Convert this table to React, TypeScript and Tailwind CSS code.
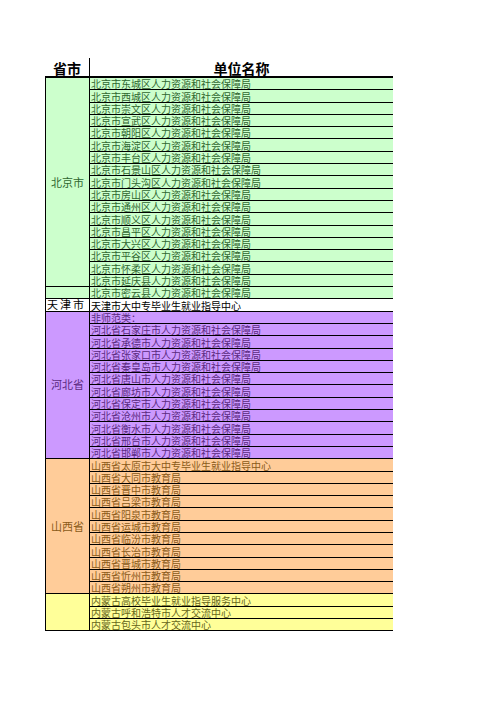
const font = { fontFamily: '"Noto Sans CJK SC", "Noto Sans", sans-serif' };

type Group = {
  label: string;
  rows: string[];
  bg: string;
  text: string;
  align?: 'center' | 'left';
};

const bj = ['东城区', '西城区', '崇文区', '宣武区', '朝阳区', '海淀区', '丰台区', '石景山区', '门头沟区', '房山区', '通州区', '顺义区', '昌平区', '大兴区', '平谷区', '怀柔区', '延庆县'];
const hb = ['石家庄市', '承德市', '张家口市', '秦皇岛市', '唐山市', '廊坊市', '保定市', '沧州市', '衡水市', '邢台市', '邯郸市'];
const sx = ['大同市', '晋中市', '吕梁市', '阳泉市', '运城市', '临汾市', '长治市', '晋城市', '忻州市', '朔州市'];

const groups: Group[] = [
  { label: '北京市', rows: bj.map((d) => `北京市${d}人力资源和社会保障局`), bg: 'bg-[#ccffcc]', text: 'text-[#2f662f]' },
  { label: '', rows: ['北京市密云县人力资源和社会保障局'], bg: 'bg-[#ccffcc]', text: 'text-[#2f662f]' },
  { label: '天津市', rows: ['天津市大中专毕业生就业指导中心'], bg: 'bg-white', text: 'text-black', align: 'left' },
  { label: '河北省', rows: ['非师范类：', ...hb.map((c) => `河北省${c}人力资源和社会保障局`)], bg: 'bg-[#cc99ff]', text: 'text-[#5a2a80]' },
  { label: '山西省', rows: ['山西省太原市大中专毕业生就业指导中心', ...sx.map((c) => `山西省${c}教育局`)], bg: 'bg-[#ffcc99]', text: 'text-[#8a5a18]' },
  { label: '', rows: ['内蒙古高校毕业生就业指导服务中心', '内蒙古呼和浩特市人才交流中心', '内蒙古包头市人才交流中心'], bg: 'bg-[#ffff99]', text: 'text-[#66661a]' },
];

function GroupBlock({ g }: { g: Group }) {
  return (
    <div className={`flex ${g.bg} ${g.text}`}>
      <div
        className={`w-[44px] shrink-0 border-l border-b border-black flex items-center text-[11px] leading-none ${
          g.align === 'left' ? 'justify-start pl-[1px] tracking-[2px] text-black' : 'justify-center'
        }`}
      >
        {g.label}
      </div>
      <div className="flex-1 flex flex-col border-l border-black">
        {g.rows.map((r, i) => (
          <div key={i} className="h-[12.3px] border-b border-black flex items-end pl-[1px] text-[10px] leading-none whitespace-nowrap">
            {r}
          </div>
        ))}
      </div>
    </div>
  );
}

export default function App() {
  return (
    <div className="w-[496px] h-[702px] bg-white pt-[58px] pl-[45px]" style={font}>
      <div className="w-[348px]">
        <div className="flex h-[20px] border-b-2 border-black font-bold text-[14px] leading-none text-black">
          <div className="w-[44px] shrink-0 flex items-center justify-center pt-[2px]">省市</div>
          <div className="flex-1 flex items-center justify-center border-l border-black pt-[2px]">单位名称</div>
        </div>
        {groups.map((g, i) => (
          <GroupBlock key={i} g={g} />
        ))}
      </div>
    </div>
  );
}
